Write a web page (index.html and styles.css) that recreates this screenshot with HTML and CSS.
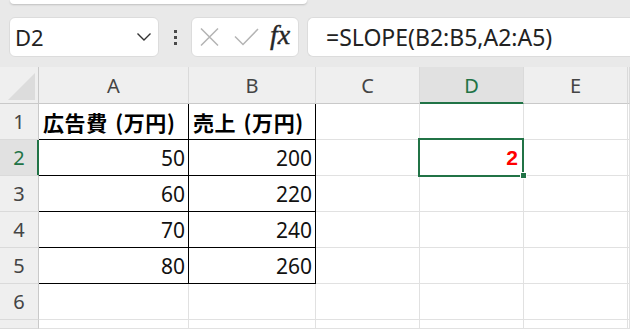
FILE: index.html
```html
<!DOCTYPE html>
<html lang="ja">
<head>
<meta charset="utf-8">
<title>SLOPE</title>
<link rel="stylesheet" href="styles.css">
</head>
<body>
<div class="app">
  <div class="ribbon-tail"></div>
  <div class="fbar">
    <div class="namebox">
      <span class="nb-text">D2</span>
      <svg class="chev" width="16" height="10" viewBox="0 0 16 10"><path d="M1.5 1.5 L8 8 L14.5 1.5" fill="none" stroke="#333" stroke-width="1.4"/></svg>
    </div>
    <div class="grip"><i></i><i></i><i></i></div>
    <div class="fxbox">
      <svg class="ico-x" width="19" height="18" viewBox="0 0 19 18"><path d="M1 0.5 L18 17.5 M18 0.5 L1 17.5" stroke="#b4b4b4" stroke-width="1.5" fill="none"/></svg>
      <svg class="ico-ok" width="25" height="18" viewBox="0 0 25 18"><path d="M1 8.5 L9 16.5 L24 1" stroke="#b4b4b4" stroke-width="1.5" fill="none"/></svg>
      <span class="fx">fx</span>
    </div>
    <div class="formula">=SLOPE(B2:B5,A2:A5)</div>
  </div>
  <div class="sheet">
    <div class="ch corner"><span class="tri"></span></div>
    <div class="ch">A</div>
    <div class="ch">B</div>
    <div class="ch">C</div>
    <div class="ch sel">D</div>
    <div class="ch">E</div>
    <div class="ch"></div>

    <div class="rh">1</div>
    <div class="c t hd">広告費 (万円)</div>
    <div class="c t hd">売上 (万円)</div>
    <div class="c"></div><div class="c"></div><div class="c"></div><div class="c"></div>

    <div class="rh sel">2</div>
    <div class="c t n">50</div>
    <div class="c t n">200</div>
    <div class="c"></div>
    <div class="c active n"><span class="res">2</span><span class="handle"></span></div>
    <div class="c"></div><div class="c"></div>

    <div class="rh">3</div>
    <div class="c t n">60</div>
    <div class="c t n">220</div>
    <div class="c"></div><div class="c"></div><div class="c"></div><div class="c"></div>

    <div class="rh">4</div>
    <div class="c t n">70</div>
    <div class="c t n">240</div>
    <div class="c"></div><div class="c"></div><div class="c"></div><div class="c"></div>

    <div class="rh">5</div>
    <div class="c t n">80</div>
    <div class="c t n">260</div>
    <div class="c"></div><div class="c"></div><div class="c"></div><div class="c"></div>

    <div class="rh">6</div>
    <div class="c"></div><div class="c"></div><div class="c"></div><div class="c"></div><div class="c"></div><div class="c"></div>

    <div class="rh"></div>
    <div class="c"></div><div class="c"></div><div class="c"></div><div class="c"></div><div class="c"></div><div class="c"></div>
  </div>
</div>
</body>
</html>
```
FILE: styles.css
```css
html, body {
  margin: 0;
  padding: 0;
}
body {
  width: 630px;
  height: 329px;
  overflow: hidden;
  background: #e9e9e9;
  font-family: "Noto Sans", "Open Sans", "Noto Sans CJK JP", sans-serif;
  color: #222;
}
.ribbon-tail {
  margin-left: 10px;
  width: 297px;
  height: 4px;
  background: #fff;
  border-radius: 0 0 6px 6px;
  box-shadow: 0 1px 2px rgba(0, 0, 0, 0.18);
}
.fbar {
  display: flex;
  height: 40px;
  margin-top: 13px;
  padding-left: 9px;
}
.namebox {
  width: 150px;
  box-sizing: border-box;
  background: #fff;
  border: 1px solid #dcdcdc;
  border-radius: 6px;
  display: flex;
  align-items: center;
  justify-content: space-between;
  padding: 0 6px 0 5px;
}
.nb-text {
  font-size: 22px;
  color: #222;
  line-height: 1;
}
.grip {
  width: 32px;
  display: flex;
  flex-direction: column;
  align-items: center;
  justify-content: center;
  gap: 3px;
}
.grip i {
  display: block;
  width: 3px;
  height: 3px;
  background: #4a4a4a;
}
.fxbox {
  width: 108px;
  box-sizing: border-box;
  background: #fff;
  border: 1px solid #dcdcdc;
  border-radius: 6px;
  display: flex;
  align-items: center;
  padding-left: 8px;
}
.ico-x { margin-right: 15px; }
.ico-ok { margin-right: 11px; }
.fx {
  font-family: "Liberation Serif", "DejaVu Serif", serif;
  font-style: italic;
  font-size: 28px;
  color: #262626;
  line-height: 1;
  margin-top: -4px;
  -webkit-text-stroke: 0.4px #262626;
}
.formula {
  flex: 1;
  margin-left: 8px;
  background: #fff;
  border: 1px solid #dcdcdc;
  border-right: none;
  border-radius: 6px 0 0 6px;
  display: flex;
  align-items: center;
  padding-left: 18px;
  font-size: 23px;
  color: #222;
  white-space: nowrap;
}
.sheet {
  margin-top: 10px;
  display: grid;
  grid-template-columns: 39px 150px 127px 104px 104px 104px 2px;
  grid-template-rows: 37px repeat(6, 36px) 9px;
  background: #fff;
}
.sheet > div {
  box-sizing: border-box;
  border-right: 1px solid #e1e1e1;
  border-bottom: 1px solid #e1e1e1;
  display: flex;
  align-items: center;
  min-width: 0;
}
.sheet > .ch {
  background: #efefef;
  border-right-color: #dadada;
  border-bottom-color: #c9c9c9;
  justify-content: center;
  font-size: 20px;
  color: #444;
}
.sheet > .ch.corner {
  border-right-color: #c9c9c9;
  position: relative;
}
.tri {
  position: absolute;
  left: 8px;
  top: 6px;
  width: 0;
  height: 0;
  border-left: 27px solid transparent;
  border-bottom: 27px solid #dcdcdc;
}
.sheet > .ch.sel {
  background: #e1e1e1;
  color: #217346;
  border-bottom-color: #217346;
  box-shadow: inset 0 -1px 0 #217346;
}
.sheet > .rh {
  background: #efefef;
  border-right-color: #c9c9c9;
  border-bottom-color: #dadada;
  justify-content: center;
  font-size: 20px;
  color: #444;
}
.sheet > .rh.sel {
  background: #e1e1e1;
  color: #217346;
  border-right-color: #217346;
  box-shadow: inset -1px 0 0 #217346;
}
.sheet > .c.t {
  border-right-color: #000;
  border-bottom-color: #000;
}
.sheet > .hd {
  font-family: "Noto Sans CJK JP", sans-serif;
  font-weight: 700;
  font-size: 21px;
  letter-spacing: 0.6px;
  word-spacing: 2px;
  color: #000;
  padding-left: 4px;
  white-space: nowrap;
}
.sheet > .n {
  justify-content: flex-end;
  padding-right: 3px;
  font-size: 21px;
  color: #111;
}
.sheet > .active {
  position: relative;
  padding-right: 5px;
}
.sheet > .active::after {
  content: "";
  position: absolute;
  top: -2px;
  left: -2px;
  right: -1px;
  bottom: -2px;
  border: 2px solid #217346;
}
.res {
  font-family: "Liberation Sans", Arial, sans-serif;
  font-weight: 700;
  color: #ff0000;
  font-size: 21px;
}
.handle {
  position: absolute;
  right: -4px;
  bottom: -4px;
  width: 5px;
  height: 5px;
  background: #217346;
  border: 1px solid #fff;
  z-index: 2;
}
```
